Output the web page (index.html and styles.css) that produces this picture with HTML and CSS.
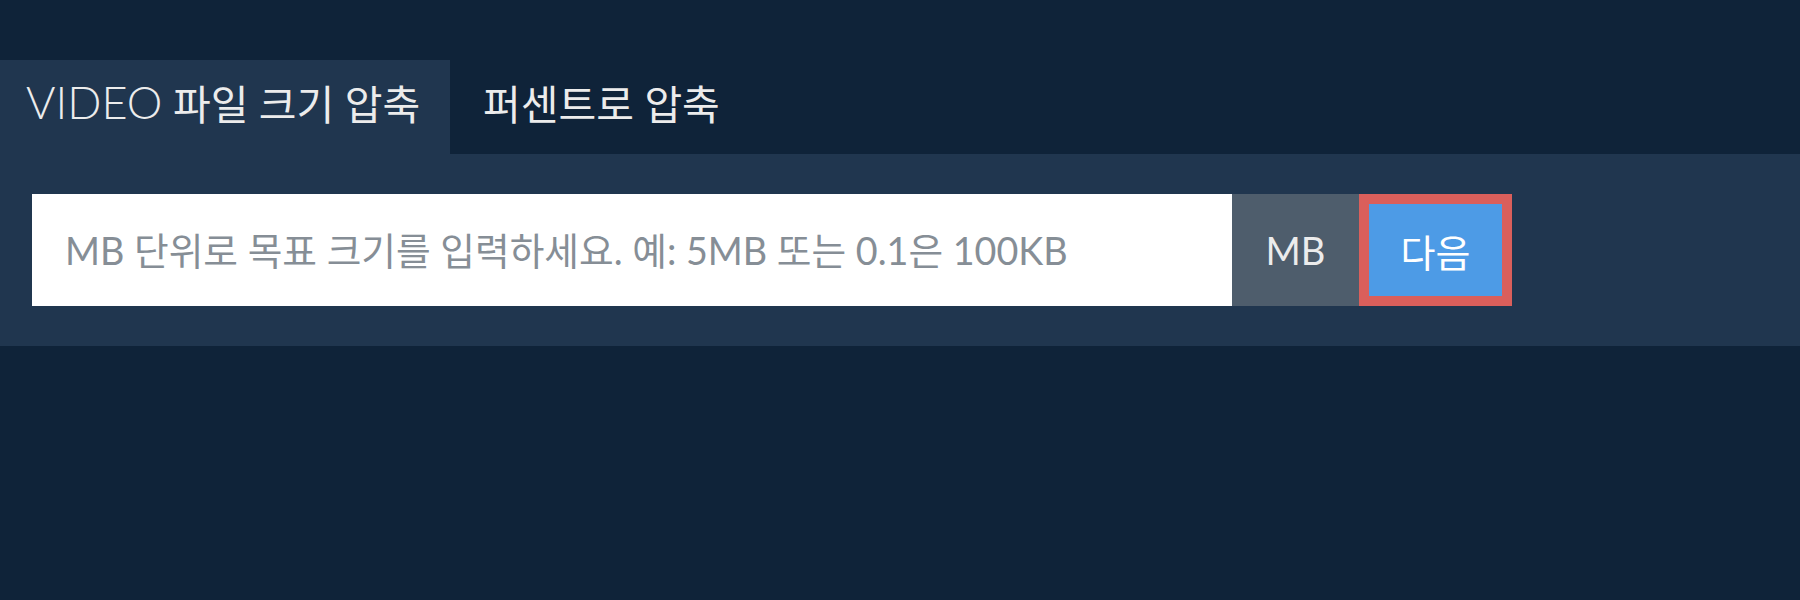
FILE: index.html
```html
<!DOCTYPE html>
<html lang="ko">
<head>
  <meta charset="UTF-8" />
  <meta name="viewport" content="width=device-width, initial-scale=1.0"/>
  <title>VIDEO 파일 크기 압축</title>
  <link rel="stylesheet" href="styles.css">
</head>
<body>

  <!-- Tabs -->
  <div class="tabs">
    <div class="tab active"><span class="thin">VIDEO</span>&nbsp;파일 크기 압축</div>
    <div class="tab">퍼센트로 압축</div>
  </div>

  <!-- Target size form -->
  <div class="panel">
    <form class="size-form" onsubmit="return false">
      <input class="size-input" type="text" placeholder="MB 단위로 목표 크기를 입력하세요. 예: 5MB 또는 0.1은 100KB">
      <span class="unit">MB</span>
      <button class="next-btn" type="submit">다음</button>
    </form>
  </div>

</body>
</html>
```

FILE: styles.css
```css
:root {
  --page-bg: #0f2339;
  --panel-bg: #20364f;
  --unit-bg: #4e5d6c;
  --blue: #4d9be6;
  --red: #da5f5b;
  --text-light: #ececec;
}

* {
  box-sizing: border-box;
  margin: 0;
  padding: 0;
}

body {
  font-family: Lato, "Noto Sans CJK KR", sans-serif;
  background-color: var(--page-bg);
  color: var(--text-light);
  padding-top: 60px;
}

.tabs {
  display: flex;
  height: 94px;
}

.tab {
  display: flex;
  align-items: center;
  padding: 0 26px 11px;
  font-size: 41px;
  font-weight: 400;
  cursor: pointer;
}

.tab .thin {
  font-size: 45px;
  font-weight: 300;
}

.tab + .tab {
  padding-left: 33px;
}

.tab.active {
  background-color: var(--panel-bg);
  width: 450px;
}

.panel {
  background-color: var(--panel-bg);
  padding: 40px 32px;
}

.size-form {
  display: flex;
  height: 112px;
}

.size-input {
  width: 1200px;
  border: none;
  outline: none;
  background: white;
  padding: 0 33px;
  font-family: inherit;
  font-size: 37.7px;
  color: #333;
}

.size-input::placeholder {
  color: #868e96;
}

.unit {
  display: flex;
  align-items: center;
  justify-content: center;
  width: 127px;
  background-color: var(--unit-bg);
  font-size: 38px;
}

.next-btn {
  width: 153px;
  border: 10px solid var(--red);
  background-color: var(--blue);
  color: white;
  font-family: inherit;
  font-size: 38px;
  cursor: pointer;
}
```
